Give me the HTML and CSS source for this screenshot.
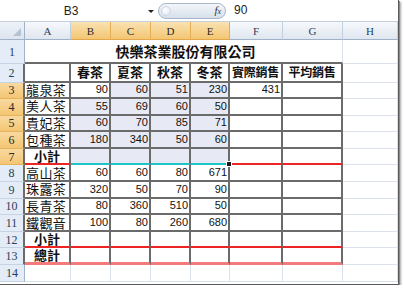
FILE: index.html
```html
<!DOCTYPE html>
<html>
<head>
<meta charset="utf-8">
<link rel="stylesheet" href="styles.css">
</head>
<body>
<div class="frame">
  <div class="fbar">
    <div class="namebox"><span class="nb-text">B3</span><span class="nb-arrow"></span></div>
    <div class="fxpill"><span class="knob"></span><span class="fx">f<span class="fxx">x</span></span></div>
    <div class="finput">90</div>
  </div>
  <div class="sheet">
    <div class="corner"><span class="tri"></span></div>
    <div class="ch">A</div>
    <div class="ch sel">B</div>
    <div class="ch sel">C</div>
    <div class="ch sel">D</div>
    <div class="ch sel">E</div>
    <div class="ch">F</div>
    <div class="ch">G</div>
    <div class="ch">H</div>

    <div class="rh">1</div>
    <div class="c title">快樂茶業股份有限公司</div>
    <div class="c"></div>

    <div class="rh tb">2</div>
    <div class="c t"></div>
    <div class="c t hdr">春茶</div>
    <div class="c t hdr">夏茶</div>
    <div class="c t hdr">秋茶</div>
    <div class="c t hdr">冬茶</div>
    <div class="c t hdr narrow">實際銷售</div>
    <div class="c t hdr narrow">平均銷售</div>
    <div class="c"></div>

    <div class="rh tb sel">3</div>
    <div class="c t lbl">龍泉茶</div>
    <div class="c t num">90</div>
    <div class="c t num hl">60</div>
    <div class="c t num hl">51</div>
    <div class="c t num hl">230</div>
    <div class="c t num">431</div>
    <div class="c t"></div>
    <div class="c"></div>

    <div class="rh tb sel">4</div>
    <div class="c t lbl">美人茶</div>
    <div class="c t num hl">55</div>
    <div class="c t num hl">69</div>
    <div class="c t num hl">60</div>
    <div class="c t num hl">50</div>
    <div class="c t"></div>
    <div class="c t"></div>
    <div class="c"></div>

    <div class="rh tb sel">5</div>
    <div class="c t lbl">貴妃茶</div>
    <div class="c t num hl">60</div>
    <div class="c t num hl">70</div>
    <div class="c t num hl">85</div>
    <div class="c t num hl">71</div>
    <div class="c t"></div>
    <div class="c t"></div>
    <div class="c"></div>

    <div class="rh tb sel">6</div>
    <div class="c t lbl">包種茶</div>
    <div class="c t num hl">180</div>
    <div class="c t num hl">340</div>
    <div class="c t num hl">50</div>
    <div class="c t num hl">60</div>
    <div class="c t"></div>
    <div class="c t"></div>
    <div class="c"></div>

    <div class="rh tb sel">7</div>
    <div class="c t red sub">小計</div>
    <div class="c t hl cy"></div>
    <div class="c t hl cy"></div>
    <div class="c t hl cy"></div>
    <div class="c t hl cy handle"></div>
    <div class="c t red"></div>
    <div class="c t red"></div>
    <div class="c"></div>

    <div class="rh tb">8</div>
    <div class="c t lbl">高山茶</div>
    <div class="c t num">60</div>
    <div class="c t num">60</div>
    <div class="c t num">80</div>
    <div class="c t num">671</div>
    <div class="c t"></div>
    <div class="c t"></div>
    <div class="c"></div>

    <div class="rh tb">9</div>
    <div class="c t lbl">珠露茶</div>
    <div class="c t num">320</div>
    <div class="c t num">50</div>
    <div class="c t num">70</div>
    <div class="c t num">90</div>
    <div class="c t"></div>
    <div class="c t"></div>
    <div class="c"></div>

    <div class="rh tb">10</div>
    <div class="c t lbl">長青茶</div>
    <div class="c t num">80</div>
    <div class="c t num">360</div>
    <div class="c t num">510</div>
    <div class="c t num">50</div>
    <div class="c t"></div>
    <div class="c t"></div>
    <div class="c"></div>

    <div class="rh tb">11</div>
    <div class="c t lbl">鐵觀音</div>
    <div class="c t num">100</div>
    <div class="c t num">80</div>
    <div class="c t num">260</div>
    <div class="c t num">680</div>
    <div class="c t"></div>
    <div class="c t"></div>
    <div class="c"></div>

    <div class="rh tb">12</div>
    <div class="c t red sub">小計</div>
    <div class="c t red"></div>
    <div class="c t red"></div>
    <div class="c t red"></div>
    <div class="c t red"></div>
    <div class="c t red"></div>
    <div class="c t red"></div>
    <div class="c"></div>

    <div class="rh tb">13</div>
    <div class="c t pink sub">總計</div>
    <div class="c t pink"></div>
    <div class="c t pink"></div>
    <div class="c t pink"></div>
    <div class="c t pink"></div>
    <div class="c t pink"></div>
    <div class="c t pink"></div>
    <div class="c"></div>

    <div class="rh">14</div>
    <div class="c"></div>
    <div class="c"></div>
    <div class="c"></div>
    <div class="c"></div>
    <div class="c"></div>
    <div class="c"></div>
    <div class="c"></div>
    <div class="c"></div>
  </div>
</div>
</body>
</html>
```

FILE: styles.css
```css
html, body {
  margin: 0;
  padding: 0;
  background: #ffffff;
}

.frame {
  width: 398px;
  height: 284px;
  border-right: 1px solid #5a5a5a;
  border-bottom: 1px solid #5a5a5a;
  box-shadow: 1px 1px 0 #8a8a8a, 2px 2px 2px rgba(0, 0, 0, 0.35);
  overflow: hidden;
  display: flex;
  flex-direction: column;
  background: #ffffff;
}

/* formula bar */
.fbar {
  height: 21px;
  border-bottom: 1px solid #c3cfdd;
  display: flex;
  align-items: center;
  background: #ffffff;
  font-family: "Liberation Sans", Arial, sans-serif;
  font-size: 12px;
  color: #1e1e1e;
}

.namebox {
  width: 158px;
  height: 21px;
  display: flex;
  align-items: center;
}

.nb-text {
  flex: 1;
  text-align: center;
  margin-right: 6px;
}

.nb-arrow {
  width: 0;
  height: 0;
  border-left: 3px solid transparent;
  border-right: 3px solid transparent;
  border-top: 3px solid #222;
  margin-right: 4px;
  margin-top: 1px;
}

.fxpill {
  width: 68px;
  height: 16px;
  box-sizing: border-box;
  border: 1px solid #a7b6ca;
  border-radius: 8px;
  background: linear-gradient(#f4f7fb, #d6dfea);
  display: flex;
  align-items: center;
  justify-content: space-between;
  padding: 0 4px 0 2px;
}

.knob {
  width: 10px;
  height: 10px;
  border-radius: 50%;
  background: radial-gradient(circle at 40% 40%, #ffffff, #dde4ee);
  border: 1px solid #cdd6e3;
  box-sizing: border-box;
}

.fx {
  font-family: "Liberation Serif", serif;
  font-style: italic;
  font-size: 11px;
  color: #333;
  line-height: 1;
}

.fxx {
  font-size: 8px;
}

.finput {
  flex: 1;
  padding-left: 8px;
  height: 21px;
  line-height: 21px;
}

/* sheet */
.sheet {
  display: grid;
  grid-template-columns: 25px 46px 40px 40px 40px 39px 53px 60px 1fr;
  grid-template-rows: 18px 24px 18.5px repeat(12, 16.6px);
  flex: 1;
}

.corner {
  background: linear-gradient(#eef2f8, #dce4ee);
  border-right: 1px solid #9fb2c8;
  border-bottom: 1px solid #9fb2c8;
  position: relative;
}

.tri {
  position: absolute;
  right: 3px;
  bottom: 3px;
  width: 0;
  height: 0;
  border-left: 8px solid transparent;
  border-bottom: 8px solid #b6c3d3;
}

.ch {
  background: linear-gradient(#f6f9fc, #dfe6ef);
  border-right: 1px solid #c2cfdf;
  border-bottom: 1px solid #9fb2c8;
  font-family: "Liberation Serif", serif;
  font-size: 11px;
  color: #2c3f57;
  display: flex;
  align-items: center;
  justify-content: center;
}

.ch.sel {
  background: linear-gradient(#fae2b2, #f3c672);
  border-right-color: #e5ae55;
  border-bottom-color: #e3a84b;
  color: #2a2a2a;
}

.rh {
  background: #e4ecf7;
  border-right: 1px solid #9fb2c8;
  border-bottom: 1px solid #c5d3e4;
  font-family: "Liberation Serif", serif;
  font-size: 12px;
  line-height: 1;
  color: #2c3f57;
  display: flex;
  align-items: center;
  justify-content: center;
}

.rh.tb {
  border-right: 2px solid #6b6b6b;
}

.rh.sel {
  background: linear-gradient(#f9d9a0, #f4c674);
  border-bottom-color: #e6b25c;
  color: #2a2a2a;
}

.c {
  border-right: 1px solid #dbe1ea;
  border-bottom: 1px solid #dbe1ea;
  display: flex;
  align-items: center;
  white-space: nowrap;
  font-family: "Liberation Sans", Arial, "Noto Sans CJK TC", sans-serif;
  font-size: 11px;
  line-height: 13px;
  color: #111;
  min-width: 0;
  min-height: 0;
}

.c.title {
  grid-column: span 7;
  justify-content: center;
  font-family: "Noto Sans CJK TC", sans-serif;
  font-weight: bold;
  font-size: 14px;
  line-height: 16px;
  border-bottom: 2px solid #6b6b6b;
  padding-left: 4px;
}

.c.t {
  border-right: 2px solid #6b6b6b;
  border-bottom: 2px solid #6b6b6b;
}

.c.hdr {
  justify-content: center;
  font-family: "Noto Sans CJK TC", sans-serif;
  font-weight: bold;
  font-size: 13px;
  line-height: 14px;
}

.c.hdr.narrow {
  font-size: 12px;
  letter-spacing: -0.3px;
}

.c.lbl {
  font-family: "Noto Sans CJK TC", sans-serif;
  font-size: 13px;
  line-height: 14px;
  padding-left: 1px;
  letter-spacing: 0.4px;
}

.c.sub {
  justify-content: center;
  font-family: "Noto Sans CJK TC", sans-serif;
  font-weight: bold;
  font-size: 13px;
  line-height: 14px;
}

.c.num {
  justify-content: flex-end;
  padding-right: 1px;
}

.c.hl {
  background: #e7eaf4;
}

.c.red {
  border-bottom-color: #ec2424;
}

.c.cy {
  border-bottom-color: #1dc4c8;
}

.c.pink {
  border-bottom: 3px solid #f37b7b;
}

.c.handle {
  position: relative;
}

.c.handle::after {
  content: "";
  position: absolute;
  right: -4px;
  bottom: -4px;
  width: 4px;
  height: 4px;
  background: #1a1a1a;
  border: 1px solid #ffffff;
  z-index: 2;
}
```
